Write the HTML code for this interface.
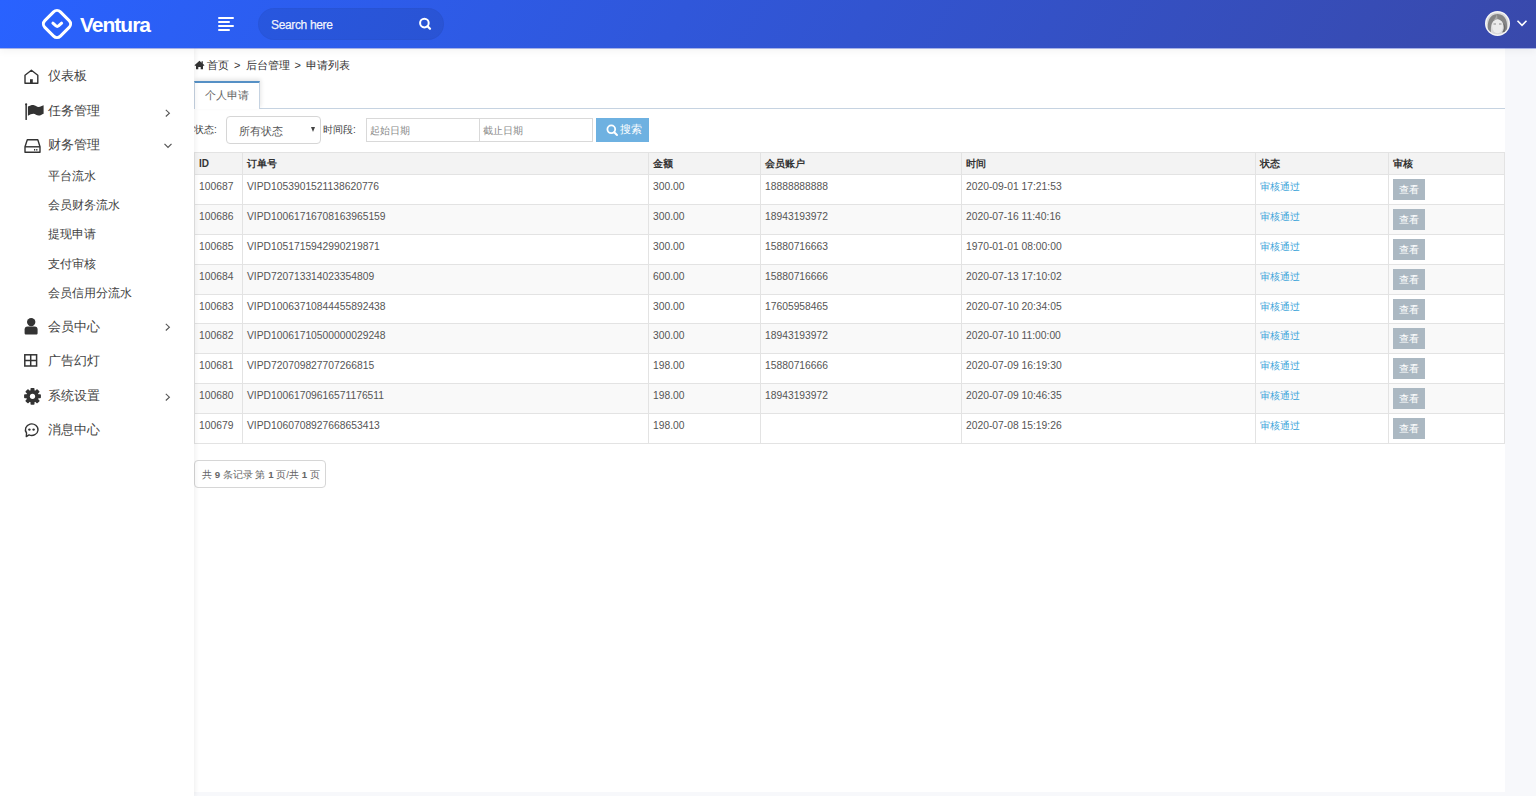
<!DOCTYPE html>
<html>
<head>
<meta charset="utf-8">
<style>
*{box-sizing:border-box;margin:0;padding:0}
html,body{width:1536px;height:796px;overflow:hidden}
body{background:#f7f8fb;font-family:"Liberation Sans",sans-serif;color:#333;position:relative}
.abs{position:absolute}
#hdr{position:absolute;left:0;top:0;width:1536px;height:48px;background:linear-gradient(120deg,#2962ff 0%,#3949ab 100%);box-shadow:0 1px 0 rgba(20,50,200,.35),0 3px 8px rgba(0,0,0,.05);z-index:5}
#side{position:absolute;left:0;top:48px;width:194px;height:748px;background:#fff;z-index:3;box-shadow:1px 0 5px rgba(0,0,0,.07)}
#main{position:absolute;left:194px;top:48px;width:1311px;height:744px;background:#fff;z-index:1}

.ham{position:absolute;left:218px;height:2px;background:#fff;border-radius:1px}
#search{position:absolute;left:258px;top:8px;width:186px;height:32px;border-radius:16px;background:rgba(0,0,0,.075);box-shadow:inset 0 0 0 1px rgba(0,0,0,.02)}
#search span{position:absolute;left:13px;top:10px;font-size:12px;line-height:14px;color:rgba(255,255,255,.92);letter-spacing:-0.35px;-webkit-text-stroke:0.25px rgba(255,255,255,.9)}
.nav{position:absolute;left:48px;font-size:13px;line-height:16px;color:#444;white-space:nowrap}
.sub{position:absolute;left:48px;font-size:12px;line-height:14px;color:#444;white-space:nowrap}
.ico{position:absolute}
.chev{position:absolute;left:163px}
/* content */
.bc{position:absolute;left:13px;top:10px;font-size:11px;line-height:14px;color:#333;word-spacing:2px;white-space:nowrap}
#tab{position:absolute;left:0;top:33px;width:66px;height:28px;border:1px solid #c6d3e1;border-top:2px solid #5590c5;border-bottom:none;background:#fff;z-index:2;box-shadow:1px -2px 4px rgba(0,0,0,.1)}
#tab span{position:absolute;left:10px;top:5px;font-size:11px;line-height:14px;color:#666;white-space:nowrap}
#tabline{position:absolute;left:0;top:60px;width:1311px;height:1px;background:#c6d3e1}
.lbl{position:absolute;font-size:10px;line-height:13px;color:#444;white-space:nowrap}
#sel{position:absolute;left:32px;top:68px;width:95px;height:28px;border:1px solid #d6d6d6;border-radius:4px;background:#fff}
#sel span{position:absolute;left:12px;top:6.5px;font-size:11px;line-height:14px;color:#555;white-space:nowrap}
#sel i{position:absolute;left:83.5px;top:10px;width:0;height:0;border-left:2.6px solid transparent;border-right:2.6px solid transparent;border-top:5px solid #444}
.inp{position:absolute;top:70px;height:24px;border:1px solid #d9d9d9;background:#fff}
.inp span{position:absolute;left:2.5px;top:4.5px;font-size:10px;line-height:13px;color:#888;white-space:nowrap}
#btn{position:absolute;left:402px;top:70px;width:53px;height:24px;background:#6eb1e1;color:#fff}
#btn span{position:absolute;left:23.5px;top:5px;font-size:11px;line-height:13px;white-space:nowrap}
table{position:absolute;left:0;top:104px;border-collapse:collapse;table-layout:fixed;width:1311px}
td,th{border:1px solid #e3e3e3;font-size:10.5px;text-align:left;vertical-align:top;white-space:nowrap;overflow:hidden}
th{height:22px;background:#f3f3f3;font-weight:bold;color:#333;padding:5px 0 0 4px;line-height:12px;font-size:10px}
td{height:29.88px;padding:6px 0 0 4px;line-height:12px;color:#555;font-size:10.3px}
tr.odd td{background:#fff}
tr.even td{background:#f9f9f9}
td a{color:#3ba4d9;text-decoration:none;font-size:10px}
.vb{display:inline-block;width:32px;height:21px;background:#abb8c2;color:#fff;font-size:10px;line-height:21px;text-align:center;margin-top:-2px}
#pg{position:absolute;left:0;top:412px;width:132px;height:28px;border:1px solid #d6d6d6;border-radius:4px}
#pg span{position:absolute;left:7px;top:8px;font-size:9.7px;line-height:12px;color:#666;white-space:nowrap}
</style>
</head>
<body>
<div id="hdr">
  <svg class="abs" style="left:40.3px;top:7px" width="34" height="34" viewBox="0 0 34 34">
    <rect x="6" y="6" width="22" height="22" rx="4.8" transform="rotate(45 17 17)" fill="none" stroke="#fff" stroke-width="3"/>
    <path d="M12.9 16.2 L15.7 18.7 Q17.25 20 18.8 18.7 L21.6 16.2" fill="none" stroke="#fff" stroke-width="3" stroke-linecap="round" stroke-linejoin="round"/>
  </svg>
  <div class="abs" style="left:80px;top:12.5px;font-size:21px;font-weight:bold;color:#fff;line-height:24px;letter-spacing:-1px">Ventura</div>
  <div class="ham" style="top:17px;width:16px"></div>
  <div class="ham" style="top:21px;width:12px"></div>
  <div class="ham" style="top:25px;width:16px"></div>
  <div class="ham" style="top:29px;width:12px"></div>
  <div id="search"><span>Search here</span>
    <svg class="abs" style="left:159px;top:9px" width="16" height="16" viewBox="0 0 16 16">
      <circle cx="7.4" cy="6.1" r="4.3" fill="none" stroke="#fff" stroke-width="2"/>
      <path d="M10.5 9.2 L13 11.8" stroke="#fff" stroke-width="2.2" stroke-linecap="round"/>
    </svg>
  </div>
  <svg class="abs" style="left:1485px;top:11px" width="25" height="25" viewBox="0 0 25 25">
    <defs><clipPath id="avc"><circle cx="12.5" cy="12.5" r="11"/></clipPath></defs>
    <circle cx="12.5" cy="12.5" r="12.5" fill="#f6f6f6"/>
    <g clip-path="url(#avc)">
      <rect x="0" y="0" width="25" height="25" fill="#d9d9d9"/>
      <path d="M3 20 C2 11 4 3.5 12.5 3 C21 3.5 23 11 22 20 L19 21 C19.5 14 18 9 12.5 8.5 C7 9 5.5 14 6 21 Z" fill="#858585"/>
      <path d="M12 3 C11 6 10 8 8 9.5 L12.5 8.5 Z" fill="#a8a8a8"/>
      <ellipse cx="12.5" cy="15.2" rx="5.3" ry="7" fill="#ececec"/>
      <path d="M8.5 13 H11 M14 13 H16.5" stroke="#777" stroke-width="0.8"/>
      <path d="M18 12 C19.5 15 19 19 17 21.5 L19.5 21 C21 17 20.5 13.5 18 12 Z" fill="#6a6a6a"/>
    </g>
  </svg>
  <svg class="abs" style="left:1516px;top:19px" width="12" height="9" viewBox="0 0 12 9">
    <path d="M1.5 1.8 L6 6.3 L10.5 1.8" fill="none" stroke="#fff" stroke-width="1.6"/>
  </svg>
</div>

<div id="side">
  <!-- 仪表板 -->
  <svg class="ico" style="left:23px;top:20px" width="18" height="18" viewBox="0 0 18 18">
    <path d="M2 7.3 L8.4 2.3 L14.8 7.3 V15.2 H2 Z" fill="none" stroke="#333" stroke-width="1.4" stroke-linejoin="round"/>
    <rect x="7" y="11.2" width="2.8" height="4" fill="#333"/>
  </svg>
  <div class="nav" style="top:20px">仪表板</div>
  <!-- 任务管理 -->
  <svg class="ico" style="left:24px;top:54px" width="22" height="20" viewBox="0 0 22 20">
    <rect x="1.4" y="2" width="1.5" height="16" rx="0.6" fill="#333"/><circle cx="2.15" cy="2.3" r="1.1" fill="#333"/>
    <path d="M3.9 4.6 C6 3.4 7.6 2.9 9.4 3 C11.5 3.2 12.6 4.9 14.6 4.9 C16.4 4.9 17.8 3.8 19.6 3.2 V11.8 C17.8 12.6 16.4 13.6 14.6 13.6 C12.6 13.6 11.4 11.8 9.4 11.8 C7.6 11.8 6 12.6 3.9 13.8 Z" fill="#333"/>
  </svg>
  <div class="nav" style="top:54.5px">任务管理</div>
  <svg class="chev" style="top:60px" width="10" height="10" viewBox="0 0 10 10"><path d="M2.8 1.9 L6.4 5.2 L2.8 8.5" fill="none" stroke="#555" stroke-width="1.1"/></svg>
  <!-- 财务管理 -->
  <svg class="ico" style="left:23px;top:89px" width="20" height="18" viewBox="0 0 20 18">
    <path d="M4.3 2.7 H14.8 L17 9.8 V15.3 H2 V9.8 Z" fill="none" stroke="#333" stroke-width="1.4" stroke-linejoin="round"/>
    <path d="M2 9.8 H17" stroke="#333" stroke-width="1.4"/>
    <rect x="11" y="12" width="1.2" height="1.6" fill="#333"/><rect x="13.2" y="12" width="1.2" height="1.6" fill="#333"/>
  </svg>
  <div class="nav" style="top:89px">财务管理</div>
  <svg class="chev" style="top:93px" width="10" height="10" viewBox="0 0 10 10"><path d="M1.5 2.8 L5 6.5 L8.5 2.8" fill="none" stroke="#555" stroke-width="1.2"/></svg>
  <div class="sub" style="top:121px">平台流水</div>
  <div class="sub" style="top:150px">会员财务流水</div>
  <div class="sub" style="top:179px">提现申请</div>
  <div class="sub" style="top:208.5px">支付审核</div>
  <div class="sub" style="top:237.5px">会员信用分流水</div>
  <!-- 会员中心 -->
  <svg class="ico" style="left:23px;top:269px" width="17" height="19" viewBox="0 0 17 19">
    <circle cx="8.2" cy="5.1" r="4.2" fill="#333"/>
    <path d="M1.6 12.6 C1.6 10.5 2.6 9.4 4.6 9.4 H11.6 C13.6 9.4 14.6 10.5 14.6 12.6 V16 C14.6 17 14 17.6 13 17.6 H3.2 C2.2 17.6 1.6 17 1.6 16 Z" fill="#333"/>
  </svg>
  <div class="nav" style="top:270.5px">会员中心</div>
  <svg class="chev" style="top:273.5px" width="10" height="10" viewBox="0 0 10 10"><path d="M2.8 1.9 L6.4 5.2 L2.8 8.5" fill="none" stroke="#555" stroke-width="1.1"/></svg>
  <!-- 广告幻灯 -->
  <svg class="ico" style="left:23px;top:305px" width="16" height="16" viewBox="0 0 16 16">
    <rect x="1.8" y="1.8" width="11.8" height="11.2" fill="none" stroke="#333" stroke-width="1.5"/>
    <path d="M7.7 1.8 V13 M1.8 7.4 H13.6" stroke="#333" stroke-width="1.5"/>
  </svg>
  <div class="nav" style="top:305px">广告幻灯</div>
  <!-- 系统设置 -->
  <svg class="ico" style="left:23px;top:338.5px" width="19" height="19" viewBox="0 0 19 19">
    <g transform="translate(9.5 9.3)" fill="#333">
      <rect x="-2" y="-8.4" width="4" height="16.8" rx="0.8"/>
      <rect x="-2" y="-8.4" width="4" height="16.8" rx="0.8" transform="rotate(45)"/>
      <rect x="-2" y="-8.4" width="4" height="16.8" rx="0.8" transform="rotate(90)"/>
      <rect x="-2" y="-8.4" width="4" height="16.8" rx="0.8" transform="rotate(135)"/>
      <circle r="6.2"/>
    </g>
    <circle cx="9.5" cy="9.3" r="2.6" fill="#fff"/>
  </svg>
  <div class="nav" style="top:340px">系统设置</div>
  <svg class="chev" style="top:343.5px" width="10" height="10" viewBox="0 0 10 10"><path d="M2.8 1.9 L6.4 5.2 L2.8 8.5" fill="none" stroke="#555" stroke-width="1.1"/></svg>
  <!-- 消息中心 -->
  <svg class="ico" style="left:23px;top:374px" width="17" height="17" viewBox="0 0 17 17">
    <path d="M3.54 11.03 A6.3 5.8 0 1 1 6.04 12.96 L3.3 14.6 Z" fill="none" stroke="#333" stroke-width="1.4" stroke-linejoin="round"/>
    <circle cx="6.4" cy="7.6" r="1.2" fill="#333"/><circle cx="10.6" cy="7.6" r="1.2" fill="#333"/>
  </svg>
  <div class="nav" style="top:374px">消息中心</div>
</div>

<div id="main">
  <svg class="abs" style="left:0;top:12px" width="12" height="10" viewBox="0 0 12 10">
    <path d="M5.5 0.8 L0.5 5.2 L1.4 6 L2 5.5 V9.3 H4.3 V7 H6.7 V9.3 H9 V5.5 L9.6 6 L10.5 5.2 L8.8 3.7 V1.2 H7.6 V2.7 Z" fill="#333"/>
  </svg>
  <div class="bc">首页 &gt; 后台管理 &gt; 申请列表</div>
  <div id="tabline"></div>
  <div id="tab"><span>个人申请</span></div>
  <div class="lbl" style="left:0;top:74.5px">状态:</div>
  <div id="sel"><span>所有状态</span><i></i></div>
  <div class="lbl" style="left:129px;top:74.5px">时间段:</div>
  <div class="inp" style="left:172px;width:114px"><span>起始日期</span></div>
  <div class="inp" style="left:285px;width:114px"><span>截止日期</span></div>
  <div id="btn">
    <svg class="abs" style="left:10px;top:6px" width="13" height="13" viewBox="0 0 13 13">
      <circle cx="5.3" cy="5.3" r="3.9" fill="none" stroke="#fff" stroke-width="1.8"/>
      <path d="M8.2 8.2 L11 11" stroke="#fff" stroke-width="2" stroke-linecap="round"/>
    </svg>
    <span>搜索</span>
  </div>
  <table>
    <colgroup><col style="width:48px"><col style="width:406px"><col style="width:112px"><col style="width:201px"><col style="width:294px"><col style="width:133px"><col style="width:116px"></colgroup>
    <tr><th>ID</th><th>订单号</th><th>金额</th><th>会员账户</th><th>时间</th><th>状态</th><th>审核</th></tr>
    <tr class="odd"><td>100687</td><td>VIPD1053901521138620776</td><td>300.00</td><td>18888888888</td><td>2020-09-01 17:21:53</td><td><a>审核通过</a></td><td><span class="vb">查看</span></td></tr>
    <tr class="even"><td>100686</td><td>VIPD10061716708163965159</td><td>300.00</td><td>18943193972</td><td>2020-07-16 11:40:16</td><td><a>审核通过</a></td><td><span class="vb">查看</span></td></tr>
    <tr class="odd"><td>100685</td><td>VIPD1051715942990219871</td><td>300.00</td><td>15880716663</td><td>1970-01-01 08:00:00</td><td><a>审核通过</a></td><td><span class="vb">查看</span></td></tr>
    <tr class="even"><td>100684</td><td>VIPD720713314023354809</td><td>600.00</td><td>15880716666</td><td>2020-07-13 17:10:02</td><td><a>审核通过</a></td><td><span class="vb">查看</span></td></tr>
    <tr class="odd"><td>100683</td><td>VIPD10063710844455892438</td><td>300.00</td><td>17605958465</td><td>2020-07-10 20:34:05</td><td><a>审核通过</a></td><td><span class="vb">查看</span></td></tr>
    <tr class="even"><td>100682</td><td>VIPD10061710500000029248</td><td>300.00</td><td>18943193972</td><td>2020-07-10 11:00:00</td><td><a>审核通过</a></td><td><span class="vb">查看</span></td></tr>
    <tr class="odd"><td>100681</td><td>VIPD720709827707266815</td><td>198.00</td><td>15880716666</td><td>2020-07-09 16:19:30</td><td><a>审核通过</a></td><td><span class="vb">查看</span></td></tr>
    <tr class="even"><td>100680</td><td>VIPD10061709616571176511</td><td>198.00</td><td>18943193972</td><td>2020-07-09 10:46:35</td><td><a>审核通过</a></td><td><span class="vb">查看</span></td></tr>
    <tr class="odd"><td>100679</td><td>VIPD1060708927668653413</td><td>198.00</td><td></td><td>2020-07-08 15:19:26</td><td><a>审核通过</a></td><td><span class="vb">查看</span></td></tr>
  </table>
  <div id="pg"><span>共 <b>9</b> 条记录 第 <b>1</b> 页/共 <b>1</b> 页</span></div>
</div>
</body>
</html>
